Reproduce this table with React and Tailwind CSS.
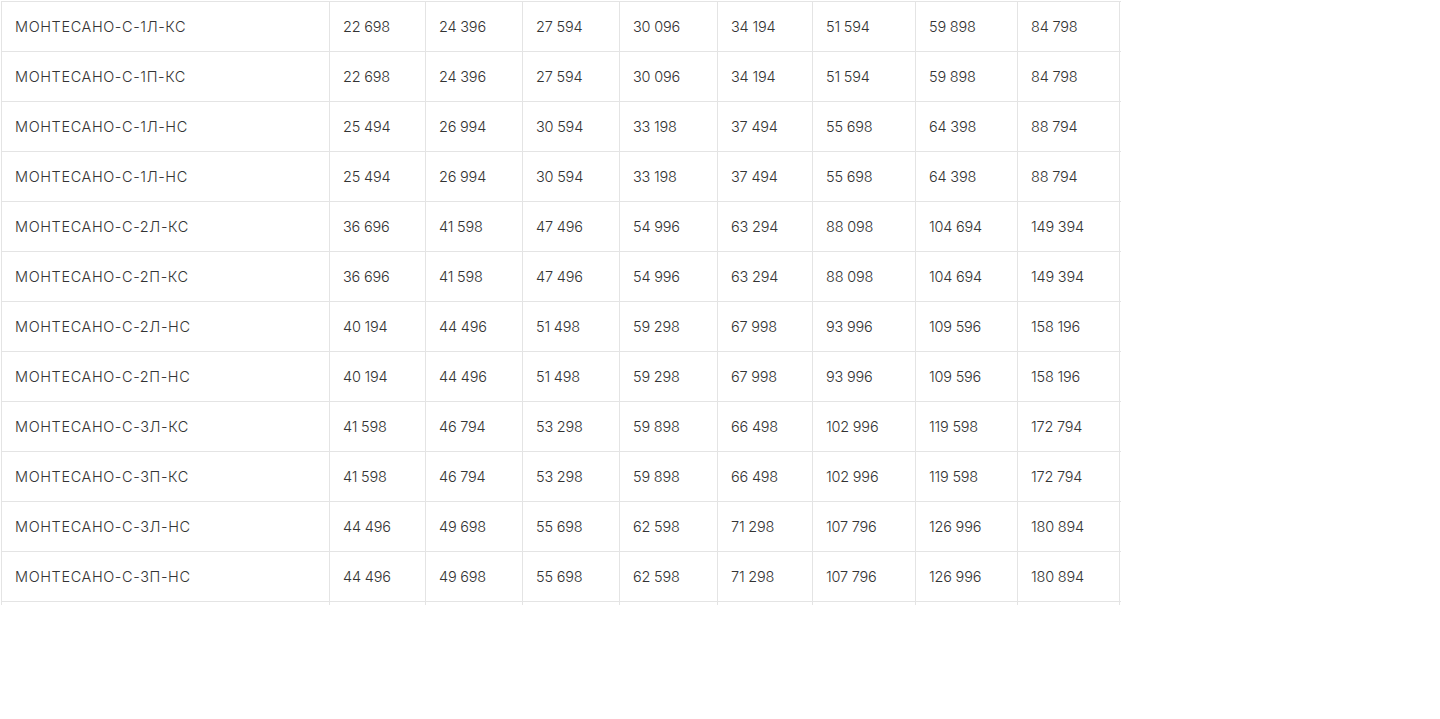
import React from "react";

const rows = [
  ["МОНТЕСАНО-С-1Л-КС", "22 698", "24 396", "27 594", "30 096", "34 194", "51 594", "59 898", "84 798"],
  ["МОНТЕСАНО-С-1П-КС", "22 698", "24 396", "27 594", "30 096", "34 194", "51 594", "59 898", "84 798"],
  ["МОНТЕСАНО-С-1Л-НС", "25 494", "26 994", "30 594", "33 198", "37 494", "55 698", "64 398", "88 794"],
  ["МОНТЕСАНО-С-1Л-НС", "25 494", "26 994", "30 594", "33 198", "37 494", "55 698", "64 398", "88 794"],
  ["МОНТЕСАНО-С-2Л-КС", "36 696", "41 598", "47 496", "54 996", "63 294", "88 098", "104 694", "149 394"],
  ["МОНТЕСАНО-С-2П-КС", "36 696", "41 598", "47 496", "54 996", "63 294", "88 098", "104 694", "149 394"],
  ["МОНТЕСАНО-С-2Л-НС", "40 194", "44 496", "51 498", "59 298", "67 998", "93 996", "109 596", "158 196"],
  ["МОНТЕСАНО-С-2П-НС", "40 194", "44 496", "51 498", "59 298", "67 998", "93 996", "109 596", "158 196"],
  ["МОНТЕСАНО-С-3Л-КС", "41 598", "46 794", "53 298", "59 898", "66 498", "102 996", "119 598", "172 794"],
  ["МОНТЕСАНО-С-3П-КС", "41 598", "46 794", "53 298", "59 898", "66 498", "102 996", "119 598", "172 794"],
  ["МОНТЕСАНО-С-3Л-НС", "44 496", "49 698", "55 698", "62 598", "71 298", "107 796", "126 996", "180 894"],
  ["МОНТЕСАНО-С-3П-НС", "44 496", "49 698", "55 698", "62 598", "71 298", "107 796", "126 996", "180 894"],
  ["", "", "", "", "", "", "", "", ""],
];

const widths = ["w-[328px]", "w-[96px]", "w-[97px]", "w-[97px]", "w-[98px]", "w-[95px]", "w-[103px]", "w-[102px]", "w-[103px]"];

export default function App() {
  return (
    <div className="w-[1440px] h-[719px] bg-white" style={{ fontFamily: '"Inter", "Liberation Sans", sans-serif' }}>
      <div className="pl-[1px] pt-[1px]">
        <div className="w-[1120px] h-[604px] overflow-hidden">
          {rows.map((r, i) => (
            <div key={i} className="flex h-[50px] border-t border-[#e4e4e4]">
              {r.map((c, j) => (
                <div
                  key={j}
                  className={`${widths[j]} shrink-0 flex items-center border-l border-[#e4e4e4] pl-[13px] text-[14.5px] font-light text-[#333333] ${j === 0 ? "tracking-[0.6px]" : "tracking-[-0.2px]"} ${j === 8 ? "border-r" : ""}`}
                >
                  {c}
                </div>
              ))}
            </div>
          ))}
        </div>
      </div>
    </div>
  );
}
